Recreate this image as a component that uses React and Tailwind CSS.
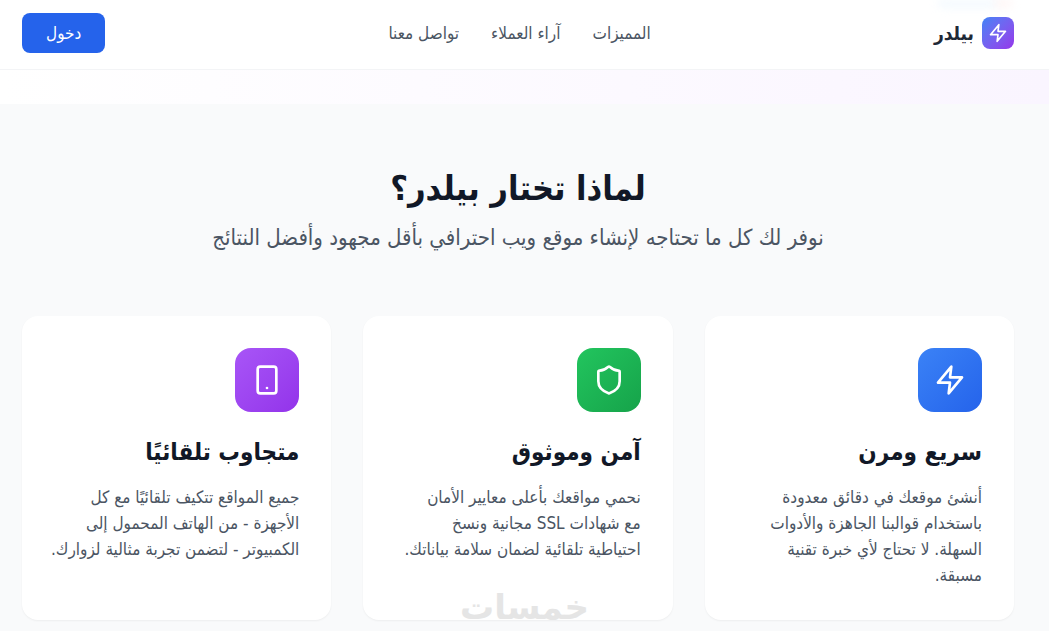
import { Shield, Smartphone } from 'lucide-react';

const links = [
  { label: 'المميزات', href: '#features' },
  { label: 'آراء العملاء', href: '#testimonials' },
  { label: 'تواصل معنا', href: '#contact' },
];

function Bolt({ className }) {
  return (
    <svg
      viewBox="0 0 24 24"
      fill="none"
      stroke="currentColor"
      strokeWidth="2"
      strokeLinecap="round"
      strokeLinejoin="round"
      className={className}
      aria-hidden="true"
    >
      <polygon points="13 2 3 14 12 14 11 22 21 10 12 10 13 2" />
    </svg>
  );
}

const features = [
  {
    icon: Bolt,
    color: 'from-[#3b82f6] to-[#2563eb]',
    title: 'سريع ومرن',
    lines: [
      'أنشئ موقعك في دقائق معدودة',
      'باستخدام قوالبنا الجاهزة والأدوات',
      'السهلة. لا تحتاج لأي خبرة تقنية',
      'مسبقة.',
    ],
  },
  {
    icon: Shield,
    color: 'from-[#22c55e] to-[#16a34a]',
    title: 'آمن وموثوق',
    lines: [
      'نحمي مواقعك بأعلى معايير الأمان',
      'مع شهادات SSL مجانية ونسخ',
      'احتياطية تلقائية لضمان سلامة بياناتك.',
    ],
  },
  {
    icon: Smartphone,
    color: 'from-[#a855f7] to-[#9333ea]',
    title: 'متجاوب تلقائيًا',
    lines: [
      'جميع المواقع تتكيف تلقائيًا مع كل',
      'الأجهزة - من الهاتف المحمول إلى',
      'الكمبيوتر - لتضمن تجربة مثالية لزوارك.',
    ],
  },
];

function Header() {
  return (
    <header className="relative flex items-center justify-between h-[70px] pr-[35px] pl-[22px] pb-[3px] bg-white border-b border-[#f3f4f6]">
      <div className="absolute top-0 right-12 w-16 h-2 rounded-b-full bg-[#f3faff] blur-xs" />
      <div className="absolute top-0 right-9 w-5 h-2 rounded-b-full bg-[#fff5f5] blur-xs" />
      <a href="#" className="flex items-center gap-2">
        <span className="w-8 h-8 rounded-lg bg-linear-to-br from-[#3b82f6] to-[#9333ea] flex items-center justify-center">
          <Bolt className="w-5 h-5 text-white" />
        </span>
        <span className="text-[19px] leading-7 font-bold text-[#1f2937]">بيلدر</span>
      </a>
      <nav className="flex items-center gap-8">
        {links.map((link) => (
          <a key={link.href} href={link.href} className="text-[17px] leading-6 text-[#4b5563] hover:text-[#2563eb] whitespace-nowrap">
            {link.label}
          </a>
        ))}
      </nav>
      <button type="button" className="px-6 h-10 rounded-lg bg-[#2563eb] hover:bg-[#1d4ed8] text-white text-[17px] leading-6 font-medium">
        دخول
      </button>
    </header>
  );
}

function FeatureCard({ feature }) {
  const Icon = feature.icon;
  return (
    <article className="bg-white rounded-2xl p-8 shadow-xs">
      <div className={`w-16 h-16 rounded-2xl bg-linear-to-br ${feature.color} flex items-center justify-center mb-6`}>
        <Icon className="w-8 h-8 text-white" />
      </div>
      <h3 className="text-2xl leading-8 font-bold text-[#111827] mb-4">{feature.title}</h3>
      <p className="text-[17px] leading-[26px] text-[#4b5563]">
        {feature.lines.map((line) => (
          <span key={line} className="block whitespace-nowrap">{line}</span>
        ))}
      </p>
    </article>
  );
}

export default function App() {
  return (
    <div dir="rtl" className="relative min-h-screen flex flex-col bg-[#f9fafb] font-['DejaVu_Sans_Condensed','DejaVu_Sans',sans-serif]">
      <Header />
      <div className="h-[34px] bg-linear-to-r from-white to-[#faf5ff]" />
      <section id="features" className="grow pt-16 pr-[35px] pl-[22px] pb-2">
        <div className="text-center mb-16">
          <h2 className="text-[34px] leading-10 font-bold text-[#111827] mb-4">لماذا تختار بيلدر؟</h2>
          <p className="text-[22px] leading-7 text-[#4b5563]">
            نوفر لك كل ما تحتاجه لإنشاء موقع ويب احترافي بأقل مجهود وأفضل النتائج
          </p>
        </div>
        <div className="grid grid-cols-3 gap-8">
          {features.map((feature) => (
            <FeatureCard key={feature.title} feature={feature} />
          ))}
        </div>
      </section>
      <div className="absolute bottom-2 inset-x-0 text-center font-['DejaVu_Sans',sans-serif] text-[34px] leading-8 font-bold text-[#e5e5e5] pointer-events-none">
        خمسات
      </div>
    </div>
  );
}
